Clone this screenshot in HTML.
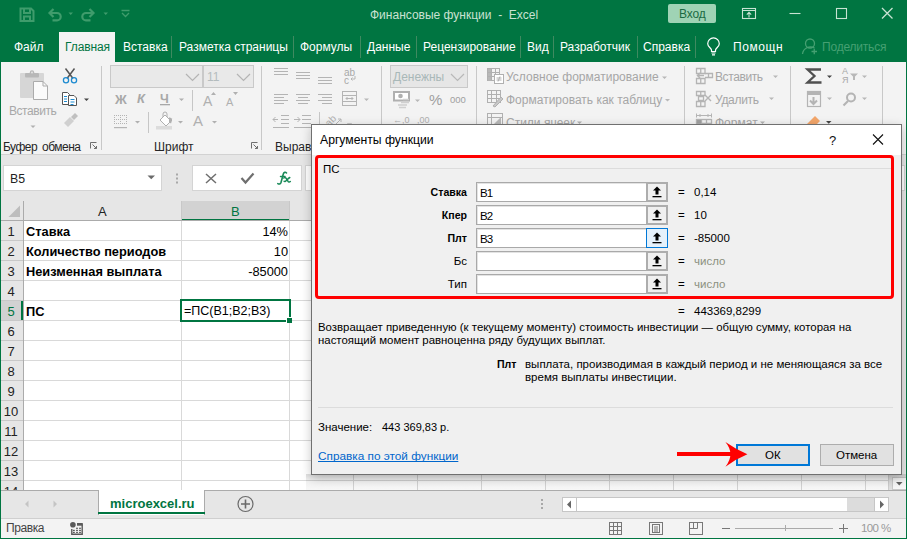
<!DOCTYPE html>
<html><head><meta charset="utf-8">
<style>
*{margin:0;padding:0;box-sizing:border-box}
html,body{width:907px;height:539px;overflow:hidden;background:#fff;font-family:"Liberation Sans",sans-serif;}
.a{position:absolute}
.t{position:absolute;white-space:pre;line-height:1}
#title{left:0;top:0;width:907px;height:62px;background:#007541}
.tab{position:absolute;top:40px;color:#fff;font-size:12px;white-space:pre;line-height:14px}
.tsep{position:absolute;top:36px;width:1px;height:22px;background:#3f8a60}
#ribbon{left:1px;top:62px;width:905px;height:92px;background:#f3f3f3}
.rsep{position:absolute;width:1px;background:#c8c8c8}
.rt{position:absolute;font-size:12px;color:#a6a6a6;white-space:pre;line-height:14px}
.gl{position:absolute;font-size:12px;color:#262626;white-space:pre;line-height:14px;top:140px}
.cell{position:absolute;font-size:12.8px;color:#000;white-space:pre;line-height:15px}
.rh{position:absolute;left:0px;width:22px;text-align:center;font-size:13px;color:#222;line-height:20px;padding-top:2px}
.dlg{font-size:11.5px;color:#000}
.lbl{position:absolute;font-size:11.5px;color:#000;white-space:pre;line-height:14px;text-align:right}
.inp{position:absolute;left:476px;width:171px;height:20px;background:#fff;border:1px solid #a9a9a9;box-shadow:inset 1px 1px 0 #e3e3e3}
.inp span{position:absolute;left:3px;top:3px;font-size:11.5px;line-height:14px;letter-spacing:-0.8px}
.btn{position:absolute;left:646px;width:22px;height:20px;background:#f0f0f0;border:2px solid #adadad}
.eq{position:absolute;left:678px;font-size:11.5px;white-space:pre;line-height:14px}
.val{position:absolute;left:694px;font-size:11.5px;white-space:pre;line-height:14px}
</style></head><body>
<!-- window green border -->
<div class="a" style="left:0;top:0;width:907px;height:539px;background:#007541"></div>
<div class="a" id="title"></div>
<div class="t" style="left:370px;top:9px;font-size:12px;color:#c9e2d2">Финансовые функции  -  Excel</div>

<!-- Excel content area -->
<div class="a" style="left:1px;top:62px;width:905px;height:475px;background:#e6e6e6"></div>
<div class="a" id="ribbon"></div>

<!-- tabs -->
<div class="a" style="left:59px;top:32px;width:56px;height:30px;background:#f3f3f3"></div>
<div class="tab" style="left:14px">Файл</div>
<div class="tab" style="left:65px;color:#007541;letter-spacing:-0.1px">Главная</div>
<div class="tab" style="left:123px">Вставка</div>
<div class="tsep" style="left:171px"></div>
<div class="tab" style="left:179px">Разметка страницы</div>
<div class="tsep" style="left:293px"></div>
<div class="tab" style="left:300px">Формулы</div>
<div class="tsep" style="left:360px"></div>
<div class="tab" style="left:367px">Данные</div>
<div class="tsep" style="left:416px"></div>
<div class="tab" style="left:423px">Рецензирование</div>
<div class="tsep" style="left:520px"></div>
<div class="tab" style="left:527px">Вид</div>
<div class="tsep" style="left:553px"></div>
<div class="tab" style="left:560px">Разработчик</div>
<div class="tsep" style="left:637px"></div>
<div class="tab" style="left:643px">Справка</div>
<div class="tsep" style="left:695px"></div>
<div class="tab" style="left:733px;letter-spacing:0.6px">Помощн</div>
<div class="tab" style="left:822px;color:#45a072;letter-spacing:-0.2px">Поделиться</div>


<!-- title bar icons -->
<svg class="a" style="left:0;top:0" width="907" height="32">
 <g fill="none" stroke="#3f9c6c" stroke-width="2">
  <path d="M20.5 8.5h10.5l2.5 2.5v10h-13z"/>
  <path d="M24 9v4h6v-4 M24 21v-4.5h6v4.5"/>
 </g>
 <g fill="none" stroke="#3f9c6c" stroke-width="2.2">
  <path d="M53.5 9 L49.5 13 L53.5 17 M50 13 H57 A3.7 3.7 0 0 1 57 20.4 H52.5"/>
  <path d="M89.5 9 L93.5 13 L89.5 17 M93 13 H86 A3.7 3.7 0 0 0 86 20.4 H90.5"/>
 </g>
 <path d="M68.5 12.5h4.5l-2.25 2.5z M103.5 12.5h4.5l-2.25 2.5z" fill="#3f9c6c"/>
 <g fill="none" stroke="#3f9c6c" stroke-width="1.3">
  <path d="M121.5 10.5h8 M122 13 l3.5 3.5 l3.5 -3.5"/>
 </g>
 <rect x="668" y="4" width="48" height="19" rx="2" fill="#9fd3b5"/>
 <g fill="none" stroke="#c8e3d3" stroke-width="1.1">
  <rect x="742.5" y="8.5" width="13" height="10"/>
  <path d="M742.5 10.5h13 M749 17.5v-5 M746.8 14.6l2.2-2.2 2.2 2.2"/>
  <path d="M789.5 13.5h11"/>
  <rect x="836.5" y="8.5" width="10" height="10"/>
  <path d="M882 8 l10.5 10.5 M892.5 8 L882 18.5" stroke-width="1.3"/>
 </g>
</svg>
<div class="t" style="left:679px;top:8px;font-size:12px;color:#1b6b43;letter-spacing:-0.1px">Вход</div>
<!-- lightbulb & person icons -->
<svg class="a" style="left:700px;top:34px" width="200" height="26">
 <g fill="none" stroke="#fff" stroke-width="1.2">
  <path d="M11.5 17.5v-1.5c0-1.8-3.8-3.2-3.8-6.3a5.8 5.8 0 0 1 11.6 0c0 3.1-3.8 4.5-3.8 6.3v1.5z"/>
  <path d="M11.5 19h4 M12 20.8h3"/>
 </g>
 <g fill="none" stroke="#45a072" stroke-width="1.3">
  <circle cx="110" cy="9.5" r="4.5"/>
  <path d="M102.5 20a8 8 0 0 1 12 -6 M111.5 17.5h5.5 M114.25 14.75v5.5"/>
 </g>
</svg>

<!-- ribbon: clipboard group -->
<svg class="a" style="left:0;top:62px" width="907" height="92">
 <g fill="#d6d6d6"><rect x="20" y="11" width="24" height="25" rx="1"/></g>
 <rect x="25" y="11" width="14" height="4.5" rx="1" fill="#b8b8b8"/>
 <circle cx="32" cy="10.5" r="2.2" fill="#b8b8b8"/><circle cx="32" cy="10.5" r="0.9" fill="#e8e8e8"/>
 <path d="M33.5 19.5h9.5l4.5 4.5v13.5h-14z" fill="#fafafa" stroke="#ababab"/>
 <path d="M43 19.5v4.5h4.5" fill="none" stroke="#ababab"/>
 <path d="M30.5 63.5h5l-2.5 2.5z" fill="#b0b0b0"/>
 <!-- scissors -->
 <g stroke="#555" stroke-width="1.5" fill="none">
  <path d="M65.5 6.5 L73 16.5 M74.5 6.5 L67 16.5"/>
 </g>
 <g stroke="#1e8bd0" stroke-width="1.3" fill="none">
  <circle cx="66" cy="18.2" r="2.6"/><circle cx="74" cy="18.2" r="2.6"/>
 </g>
 <!-- copy -->
 <path d="M62.5 30.5h5l2 2v10h-7z" fill="#fff" stroke="#555"/>
 <path d="M68.5 33.5h5.5l2.5 2.5v7.5h-8z" fill="#fff" stroke="#555"/>
 <path d="M64 34.5h3 M64 37h3 M64 39.5h3 M70.5 37.5h4 M70.5 40h4 M70.5 42.5h3" stroke="#1e8bd0" stroke-width="1"/>
 <path d="M84 36.5h5l-2.5 2.5z" fill="#444"/>
 <!-- format painter -->
 <path d="M64 61 l6 -6 l4 4 l-6 6z" fill="#d0d0d0"/>
 <path d="M71 55 l4 -4 l3 3 l-4 4z" fill="#c0c0c0"/>
 <!-- launcher -->
 <g fill="none" stroke="#6f6f6f" stroke-width="1">
  <path d="M90.5 86.5v-6h6 M92.5 82.5l4 4 M96.5 84v2.5h-2.5 M251.5 86.5v-6h6 M253.5 82.5l4 4 M257.5 84v2.5h-2.5"/>
 </g>
 <rect x="101" y="4" width="1" height="84" fill="#c8c8c8"/>
 <!-- font group -->
 <rect x="110.5" y="3.5" width="92" height="22" fill="#e9e9e9" stroke="#c9c9c9"/>
 <rect x="203.5" y="3.5" width="50" height="22" fill="#e9e9e9" stroke="#c9c9c9"/>
 <path d="M186 12l6.5 6.5 6.5-6.5 M237 12l6.5 6.5 6.5-6.5" fill="none" stroke="#b4b4b4" stroke-width="1.2"/>
 <rect x="192" y="28" width="1" height="21" fill="#c6c6c6"/>
 <rect x="148" y="50" width="1" height="21" fill="#c6c6c6"/>
 <path d="M179 36.5h5l-2.5 2.5z M135 59h5l-2.5 2.5z M178 59h5l-2.5 2.5z M212 59h5l-2.5 2.5z" fill="#b0b0b0"/>
 <path d="M211 33h5l-2.5-3z M233 30h5l-2.5 3z" fill="#b0b0b0"/>
 <rect x="160" y="42" width="10" height="1.3" fill="#a8a8a8"/>
 <!-- borders icon -->
 <g fill="#b4b4b4">
  <path d="M114 53h1v1h-1z M116 53h1v1h-1z M118 53h1v1h-1z M120 53h1v1h-1z M122 53h1v1h-1z M124 53h1v1h-1z M126 53h1v1h-1z
           M114 57h1v1h-1z M116 57h1v1h-1z M118 57h1v1h-1z M120 57h1v1h-1z M122 57h1v1h-1z M124 57h1v1h-1z M126 57h1v1h-1z
           M114 61h1v1h-1z M116 61h1v1h-1z M118 61h1v1h-1z M120 61h1v1h-1z M122 61h1v1h-1z M124 61h1v1h-1z M126 61h1v1h-1z
           M114 55h1v1h-1z M114 59h1v1h-1z M120 55h1v1h-1z M120 59h1v1h-1z M126 55h1v1h-1z M126 59h1v1h-1z"/>
  <rect x="114" y="65" width="13" height="1.2"/>
 </g>
 <!-- fill bucket -->
 <path d="M160 58 l5 -5 l6 6 l-5 5z" fill="#fff" stroke="#b0b0b0"/>
 <path d="M163 55 v-3 a2 2 0 0 1 4 0 v3" fill="none" stroke="#b0b0b0"/>
 <rect x="156" y="64" width="16" height="3.5" fill="#dcdcdc"/><path d="M169 55.5a2.5 2.5 0 0 1 3 3l-1 3-2-1.5z" fill="#b0b0b0"/>
 <!-- align group -->
 <rect x="261" y="4" width="1" height="84" fill="#c8c8c8"/>
 <g stroke="#b4b4b4" stroke-width="1">
  <path d="M274 6.5h14 M274 9.5h14 M274 12.5h14"/>
  <path d="M296 10.5h14 M296 13.5h14 M296 16.5h14"/>
  <path d="M318 15.5h14 M318 18.5h14 M318 21.5h14"/>
  <path d="M274 32.5h14 M274 35.5h10 M274 38.5h14 M274 41.5h10"/>
  <path d="M296 32.5h14 M298 35.5h10 M296 38.5h14 M298 41.5h10"/>
  <path d="M318 32.5h14 M322 35.5h10 M318 38.5h14 M322 41.5h10"/>
  <path d="M281 53.5h8 M281 57.5h8 M281 61.5h8 M273 65.5h16"/>
  <path d="M302 53.5h9 M302 57.5h9 M302 61.5h9 M294 65.5h17"/>
 </g>
 <path d="M278 57.5h-5 l2.5 -2.5 M273 57.5 l2.5 2.5 M294 57.5h6 l-2.5 -2.5 M300 57.5 l-2.5 2.5" fill="none" stroke="#b4b4b4"/>
 <path d="M355 14v3h-4 M352.5 15.5l-1.5 1.5 1.5 1.5" fill="none" stroke="#b0b0b0" stroke-width="0.9"/>
 <rect x="342.5" y="29.5" width="14" height="14" fill="none" stroke="#b4b4b4"/>
 <path d="M342.5 33.5h14 M342.5 39.5h14 M346 36.5h7 M346 36.5l1.5-1.5 M346 36.5l1.5 1.5 M353 36.5l-1.5-1.5 M353 36.5l-1.5 1.5" fill="none" stroke="#b4b4b4"/>
 <path d="M364 36.5h5l-2.5 2.5z M347 61.5h5l-2.5 2.5z" fill="#b8b8b8"/>
 <rect x="319" y="50" width="1" height="22" fill="#c6c6c6"/>
 <text x="0" y="0" font-size="10" fill="#b0b0b0" transform="translate(329 65) rotate(-45)" font-family="Liberation Sans">ab</text><path d="M336 62l5-5 M338 57h3v3" stroke="#b8b8b8" stroke-width="1" fill="none"/><path d="M347 61.5h5l-2.5 2.5z" fill="#b8b8b8"/>
 <!-- number group -->
 <rect x="381" y="4" width="1" height="84" fill="#c8c8c8"/>
 <rect x="390.5" y="3.5" width="77" height="22" fill="#e6e6e6" stroke="#c9c9c9"/>
 <path d="M451 12l6.5 6.5 6.5-6.5" fill="none" stroke="#b8b8b8" stroke-width="1.2"/>
 <rect x="394" y="30" width="15" height="8.5" fill="#fff" stroke="#b0b0b0" stroke-width="2"/>
 <circle cx="400.5" cy="34" r="2.3" fill="#b0b0b0"/>
 <path d="M403 37.5h6 M401 40.5h8 M398 43h9 M399 45.5h7" stroke="#d0d0d0" stroke-width="1.6"/>
 <path d="M415 37.5h5l-2.5 2.5z M662 14.5h5l-2.5 2.5z M665 37h5l-2.5 2.5z M773 13.5h5l-2.5 2.5z M769 35.5h5l-2.5 2.5z M862 13.5h5l-2.5 2.5z M862 35.5h5l-2.5 2.5z M827 35.5h5l-2.5 2.5z" fill="#b8b8b8"/>
 <rect x="476" y="4" width="1" height="84" fill="#c8c8c8"/>
 <!-- styles icons -->
 <g fill="none" stroke="#b0b0b0">
  <rect x="487.5" y="6.5" width="12" height="12"/><rect x="488" y="7" width="3.5" height="11.5" fill="#b8b8b8" stroke="none"/>
  <path d="M487.5 10.5h12 M487.5 14.5h12 M491.5 6.5v12 M495.5 6.5v12"/>
  <rect x="494.5" y="12.5" width="9" height="9" fill="#fff"/>
  <path d="M496.5 16h5 M496.5 18h5 M500 14.5l-2 5"/>
  <rect x="487.5" y="28.5" width="13" height="12"/>
  <path d="M487.5 32.5h13 M487.5 36.5h13 M491.5 28.5v12 M496.5 28.5v12"/>
  <path d="M493 44 l8 -9 l2 2 l-8 8z" fill="#c8c8c8"/>
 </g>
 <rect x="684" y="4" width="1" height="84" fill="#c8c8c8"/>
 <!-- cells icons -->
 <g fill="none" stroke="#b4b4b4" stroke-width="1.3">
  <path d="M696.5 6.5h8.5v5h-8.5z M696.5 16.5h8.5v5h-8.5z M700.75 6.5v5 M700.75 16.5v5"/>
  <path d="M705 11.5h7.5v4h-7.5 M708.5 11.5v4"/>
  <path d="M704 13.5h-6 M700 11l-2.5 2.5 2.5 2.5" stroke-width="1.5"/>
  <path d="M696.5 29.5h8.5v4h-8.5z M696.5 39.5h8.5v5h-8.5z M700.75 29.5v4 M700.75 39.5v5 M698.5 34.5h5v4h-5z"/>
  <path d="M705 33l6 6 M711 33l-6 6" stroke-width="1.4"/>
  <path d="M696.5 53.5h15 M696.5 51.5v4 M711.5 51.5v4 M699 53.5l1.5-1.5 M699 53.5l1.5 1.5 M709 53.5l-1.5-1.5 M709 53.5l-1.5 1.5" stroke-width="1"/>
  <rect x="696.5" y="57.5" width="15" height="8"/>
  <path d="M696.5 61.5h15 M701.5 57.5v8 M706.5 57.5v8"/>
 </g>
 <rect x="697" y="58" width="4" height="3.5" fill="#a0a0a0"/>
 <rect x="790" y="4" width="1" height="84" fill="#c8c8c8"/>
 <path d="M821 7.5H807.5L814.5 14L807.5 20.5H821.5" fill="none" stroke="#505050" stroke-width="2.3" stroke-linejoin="miter"/>
 <path d="M827 13.5h5l-2.5 2.5z M826 59h5.5l-2.75 2.75z" fill="#444"/>
 <g fill="none" stroke="#b4b4b4" stroke-width="1.2">
  <rect x="807.5" y="29.5" width="13" height="15"/>
  <path d="M813.5 35v7 M810 38.5l3.5 3.5 3.5-3.5" stroke-width="2"/>
  <circle cx="851" cy="35.5" r="4" stroke-width="2"/>
  <path d="M848 39l-4.5 4.5" stroke-width="2.2"/>
 </g>
 <rect x="807" y="29" width="14" height="4" fill="#b4b4b4"/><path d="M850 11.5h8l-3 3v3.5h-2v-3.5z" fill="#b8b8b8"/>
 <rect x="882" y="4" width="1" height="84" fill="#c8c8c8"/>
 <path d="M805 64 l10 -10 l5 5 l-10 10z" fill="#f3a66a"/>
 <path d="M577 59.5h5l-2.5 2.5z M760 59.5h5l-2.5 2.5z" fill="#b0b0b0"/>
 <g fill="none" stroke="#b0b0b0">
  <rect x="487.5" y="51.5" width="15" height="12"/>
  <path d="M487.5 55.5h15 M491.5 51.5v12"/>
  <path d="M496.5 55.5h6"/>
 </g>
 <path d="M493 63l8-8v8z" fill="#b8b8b8"/>
</svg>
<div class="rt" style="left:9px;top:104px;font-size:12px;letter-spacing:-0.45px;color:#a8a8a8">Вставить</div>
<div class="gl" style="left:3px;top:140px;font-size:12px;letter-spacing:-0.5px;word-spacing:2px">Буфер обмена</div>
<div class="gl" style="left:154px">Шрифт</div>
<div class="gl" style="left:275px">Выравнивание</div>
<div class="rt" style="left:115px;top:93px;font-weight:bold;font-size:13px;color:#a8a8a8">Ж</div>
<div class="rt" style="left:137px;top:92px;font-weight:bold;font-style:italic;font-size:13px;color:#a8a8a8">К</div>
<div class="rt" style="left:160px;top:92px;font-weight:bold;font-size:12.5px;color:#a8a8a8">Ч</div>
<div class="rt" style="left:203px;top:94px;font-size:14px;color:#b0b0b0">A</div>
<div class="rt" style="left:226px;top:95px;font-size:11px;color:#b0b0b0">A</div>
<div class="rt" style="left:193px;top:114px;font-size:15px;color:#b0b0b0">A</div>
<div class="rt" style="left:207px;top:70px;font-size:12px;color:#b4bcbe">11</div>
<div class="rt" style="left:344px;top:68px;font-size:10px;line-height:10px;color:#a8a8a8">ab</div><div class="rt" style="left:344px;top:76px;font-size:10px;line-height:10px;color:#a8a8a8">c</div>
<div class="rt" style="left:393px;top:70px;font-size:12px;color:#a9b8b8">Денежны</div>
<div class="rt" style="left:429px;top:93px;font-size:15px;color:#a0a0a0">%</div>
<div class="rt" style="left:450px;top:93px;font-size:9.5px;color:#a0a0a0">000</div>
<div class="rt" style="left:393px;top:113px;font-size:9px;color:#b0b0b0">←,0</div>
<div class="rt" style="left:417px;top:113px;font-size:9px;color:#b0b0b0">,00</div>
<div class="rt" style="left:506px;top:70px">Условное форматирование</div>
<div class="rt" style="left:506px;top:93px">Форматировать как таблицу</div>
<div class="rt" style="left:506px;top:116px">Стили ячеек</div>
<div class="rt" style="left:715px;top:70px;letter-spacing:-0.4px">Вставить</div>
<div class="rt" style="left:715px;top:93px;letter-spacing:-0.3px">Удалить</div>
<div class="rt" style="left:715px;top:116px">Формат</div>
<div class="rt" style="left:842px;top:67px;font-size:9px;line-height:9px;color:#a8a8a8">А</div><div class="rt" style="left:842px;top:76px;font-size:9px;line-height:9px;color:#a8a8a8">Я</div>

<!-- grid -->
<div class="a" style="left:1px;top:154px;width:905px;height:336px;background:#e6e6e6;border-top:1px solid #d2d2d2"></div>
<div class="a" style="left:3px;top:165px;width:159px;height:26px;background:#fff;border:1px solid #d4d4d4"></div>
<div class="t" style="left:10px;top:173px;font-size:12.3px;color:#222">B5</div>

<div class="a" style="left:192px;top:165px;width:110px;height:26px;background:#fff;border:1px solid #d4d4d4"></div>
<svg class="a" style="left:270px;top:165px" width="25" height="25"><g fill="none" stroke="#1a8a58" stroke-linecap="round">
 <path d="M16.5 8 C15.5 6.8 13.8 7.2 13.3 9 L11 17.5 C10.5 19 9.2 19.5 7.8 18.6" stroke-width="1.6"/>
 <path d="M10.5 11.5 H15" stroke-width="1.5"/>
 <path d="M13.8 13 C15.3 12 16.3 13 16.8 14.5 L17.8 16 C18.3 17 19.3 17.5 20.3 16.5" stroke-width="1.5"/>
 <path d="M19.8 12.5 C18.8 13 18.3 13.5 17.3 14.5 L15.8 16 C15.3 16.5 14.6 16.8 14.1 16.3" stroke-width="1.5"/>
</g></svg>
<div class="a" style="left:305px;top:165px;width:600px;height:26px;background:#fff;border:1px solid #d4d4d4"></div>
<svg class="a" style="left:0;top:155px" width="907" height="45"><path d="M147.5 20.5h7.5l-3.75 3.75z" fill="#6a6a6a"/><g fill="#a8a8a8"><rect x="176" y="18.5" width="2" height="2"/><rect x="176" y="22.5" width="2" height="2"/><rect x="176" y="26.5" width="2" height="2"/></g><path d="M206 19l10 9 M216 19l-10 9" stroke="#6f6f6f" stroke-width="1.5" fill="none"/><path d="M241.5 23l4 4.5 8-9" stroke="#6f6f6f" stroke-width="2.2" fill="none"/></svg>
<div class="a" style="left:23px;top:220px;width:865px;height:270px;background:#fff"></div>
<div class="a" style="left:181px;top:201px;width:108px;height:19px;background:#d2d2d2"></div>
<div class="a" style="left:181px;top:219px;width:108px;height:2px;background:#007541"></div>
<div class="a" style="left:1px;top:300px;width:22px;height:20px;background:#d2d2d2"></div>
<div class="a" style="left:21px;top:300px;width:2px;height:20px;background:#007541"></div>
<svg class="a" style="left:0;top:195px" width="907" height="295">
<path d="M20 10.5v11.5h-11.5z" fill="#bdbdbd"/>
<rect x="23" y="6" width="1" height="289" fill="#ababab"/>
<rect x="1" y="25" width="887" height="1" fill="#ababab"/>
<rect x="181" y="6" width="1" height="19" fill="#c8c8c8"/>
<rect x="181" y="26" width="1" height="269" fill="#d9d9d9"/>
<rect x="289" y="6" width="1" height="19" fill="#c8c8c8"/>
<rect x="289" y="26" width="1" height="269" fill="#d9d9d9"/>
<rect x="353" y="6" width="1" height="19" fill="#c8c8c8"/>
<rect x="353" y="26" width="1" height="269" fill="#d9d9d9"/>
<rect x="417" y="6" width="1" height="19" fill="#c8c8c8"/>
<rect x="417" y="26" width="1" height="269" fill="#d9d9d9"/>
<rect x="481" y="6" width="1" height="19" fill="#c8c8c8"/>
<rect x="481" y="26" width="1" height="269" fill="#d9d9d9"/>
<rect x="545" y="6" width="1" height="19" fill="#c8c8c8"/>
<rect x="545" y="26" width="1" height="269" fill="#d9d9d9"/>
<rect x="609" y="6" width="1" height="19" fill="#c8c8c8"/>
<rect x="609" y="26" width="1" height="269" fill="#d9d9d9"/>
<rect x="673" y="6" width="1" height="19" fill="#c8c8c8"/>
<rect x="673" y="26" width="1" height="269" fill="#d9d9d9"/>
<rect x="737" y="6" width="1" height="19" fill="#c8c8c8"/>
<rect x="737" y="26" width="1" height="269" fill="#d9d9d9"/>
<rect x="801" y="6" width="1" height="19" fill="#c8c8c8"/>
<rect x="801" y="26" width="1" height="269" fill="#d9d9d9"/>
<rect x="865" y="6" width="1" height="19" fill="#c8c8c8"/>
<rect x="865" y="26" width="1" height="269" fill="#d9d9d9"/>
<rect x="24" y="45" width="864" height="1" fill="#d9d9d9"/>
<rect x="1" y="45" width="22" height="1" fill="#c8c8c8"/>
<rect x="24" y="65" width="864" height="1" fill="#d9d9d9"/>
<rect x="1" y="65" width="22" height="1" fill="#c8c8c8"/>
<rect x="24" y="85" width="864" height="1" fill="#d9d9d9"/>
<rect x="1" y="85" width="22" height="1" fill="#c8c8c8"/>
<rect x="24" y="105" width="864" height="1" fill="#d9d9d9"/>
<rect x="1" y="105" width="22" height="1" fill="#c8c8c8"/>
<rect x="24" y="125" width="864" height="1" fill="#d9d9d9"/>
<rect x="1" y="125" width="22" height="1" fill="#c8c8c8"/>
<rect x="24" y="145" width="864" height="1" fill="#d9d9d9"/>
<rect x="1" y="145" width="22" height="1" fill="#c8c8c8"/>
<rect x="24" y="165" width="864" height="1" fill="#d9d9d9"/>
<rect x="1" y="165" width="22" height="1" fill="#c8c8c8"/>
<rect x="24" y="185" width="864" height="1" fill="#d9d9d9"/>
<rect x="1" y="185" width="22" height="1" fill="#c8c8c8"/>
<rect x="24" y="205" width="864" height="1" fill="#d9d9d9"/>
<rect x="1" y="205" width="22" height="1" fill="#c8c8c8"/>
<rect x="24" y="225" width="864" height="1" fill="#d9d9d9"/>
<rect x="1" y="225" width="22" height="1" fill="#c8c8c8"/>
<rect x="24" y="245" width="864" height="1" fill="#d9d9d9"/>
<rect x="1" y="245" width="22" height="1" fill="#c8c8c8"/>
<rect x="24" y="265" width="864" height="1" fill="#d9d9d9"/>
<rect x="1" y="265" width="22" height="1" fill="#c8c8c8"/>
<rect x="24" y="285" width="864" height="1" fill="#d9d9d9"/>
<rect x="1" y="285" width="22" height="1" fill="#c8c8c8"/>
</svg>
<div class="t" style="left:98px;top:205px;font-size:13px;color:#222">A</div>
<div class="t" style="left:231px;top:205px;font-size:13px;color:#007541">B</div>
<div class="rh" style="top:220px;color:#222">1</div>
<div class="rh" style="top:240px;color:#222">2</div>
<div class="rh" style="top:260px;color:#222">3</div>
<div class="rh" style="top:280px;color:#222">4</div>
<div class="rh" style="top:300px;color:#007541">5</div>
<div class="rh" style="top:320px;color:#222">6</div>
<div class="rh" style="top:340px;color:#222">7</div>
<div class="rh" style="top:360px;color:#222">8</div>
<div class="rh" style="top:380px;color:#222">9</div>
<div class="rh" style="top:400px;color:#222">10</div>
<div class="rh" style="top:420px;color:#222">11</div>
<div class="rh" style="top:440px;color:#222">12</div>
<div class="rh" style="top:460px;color:#222">13</div>
<div class="rh" style="top:480px;color:#222">14</div>
<div class="cell" style="left:26px;top:224px;font-weight:bold">Ставка</div>
<div class="cell" style="left:26px;top:244px;font-weight:bold">Количество периодов</div>
<div class="cell" style="left:26px;top:264px;font-weight:bold">Неизменная выплата</div>
<div class="cell" style="left:26px;top:304px;font-weight:bold">ПС</div>
<div class="cell" style="right:619px;top:224px">14%</div>
<div class="cell" style="right:619px;top:244px">10</div>
<div class="cell" style="right:619px;top:264px">-85000</div>
<div class="a" style="left:180px;top:299px;width:111px;height:23px;border:2px solid #007541;background:#fff"></div>
<div class="a" style="left:286px;top:317px;width:6px;height:6px;background:#007541;border:1px solid #fff;border-right:0;border-bottom:0"></div>
<div class="cell" style="left:184px;top:304px;font-size:12.5px">=ПС(B1;B2;B3)</div>
<div class="a" style="left:888px;top:201px;width:17px;height:289px;background:#e6e6e6;border-left:1px solid #d4d4d4"></div>
<div class="a" style="left:892px;top:477px;width:14px;height:13px;background:#fff;border:1px solid #d0d0d0;border-right:0"></div>
<svg class="a" style="left:892px;top:477px" width="14" height="13"><path d="M4 5h6.5l-3.25 3.5z" fill="#666"/></svg>
<div class="a" style="left:1px;top:490px;width:905px;height:29px;background:#e6e6e6;border-top:1px solid #ababab;border-bottom:1px solid #cfcfcf"></div>
<div class="a" style="left:98px;top:490px;width:107px;height:25px;background:#fff;border-left:1px solid #ababab;border-right:1px solid #ababab"></div>
<div class="a" style="left:98px;top:512px;width:107px;height:2px;background:#007541"></div>
<div class="t" style="left:110px;top:497px;font-size:13px;font-weight:bold;color:#007541">microexcel.ru</div>
<svg class="a" style="left:0;top:490px" width="907" height="48"><path d="M25 14l3.5-3.5v7z M57 14l-3.5-3.5v7z" fill="#c4c4c4"/><circle cx="245.5" cy="14" r="7.5" fill="none" stroke="#6a6a6a" stroke-width="1.2"/><path d="M245.5 9.5v9 M241 14h9" stroke="#6a6a6a" stroke-width="1.6"/><g fill="#a8a8a8"><rect x="541" y="9" width="2" height="2"/><rect x="541" y="13" width="2" height="2"/><rect x="541" y="17" width="2" height="2"/></g></svg>
<div class="a" style="left:562px;top:497px;width:327px;height:15px;background:#fff;border:1px solid #c6c6c6"></div>
<div class="a" style="left:576px;top:497px;width:1px;height:15px;background:#c6c6c6"></div>
<div class="a" style="left:847px;top:498px;width:27px;height:13px;background:#dcdcdc"></div>
<div class="a" style="left:874px;top:497px;width:1px;height:15px;background:#c6c6c6"></div>
<svg class="a" style="left:562px;top:497px" width="327" height="15"><path d="M5 7.5l4-4v8z M322 7.5l-4-4v8z" fill="#666"/></svg>
<div class="a" style="left:1px;top:519px;width:905px;height:19px;background:#f3f3f3"></div>
<div class="t" style="left:6px;top:522px;font-size:12px;letter-spacing:-0.4px;color:#444">Правка</div>
<svg class="a" style="left:0;top:518px" width="907" height="20"><circle cx="72.9" cy="6.8" r="2.8" fill="#5a5a5a"/><rect x="77" y="5" width="5.8" height="2.7" fill="#5a5a5a"/><path d="M71.8 11v5.3h10.4v-10" fill="none" stroke="#5a5a5a" stroke-width="1.4"/><g fill="#5a5a5a"><rect x="76.1" y="9.7" width="1.8" height="1.2"/><rect x="79.1" y="9.7" width="1.8" height="1.2"/><rect x="73" y="11.8" width="1.8" height="1.2"/><rect x="76.1" y="11.8" width="1.8" height="1.2"/><rect x="79.1" y="11.8" width="1.8" height="1.2"/><rect x="73" y="13.8" width="1.8" height="1.2"/><rect x="76.1" y="13.8" width="1.8" height="1.2"/><rect x="79.1" y="13.8" width="1.8" height="1.2"/></g><g fill="none" stroke="#777"><rect x="609.5" y="4.5" width="12" height="12"/><path d="M609.5 8.5h12 M609.5 12.5h12 M613.5 4.5v12 M617.5 4.5v12"/><rect x="649.5" y="4.5" width="13" height="12"/><rect x="652.5" y="6.5" width="7" height="8"/><path d="M654 9h4 M654 11h4 M654 13h4"/><rect x="689.5" y="4.5" width="13" height="12"/><path d="M693.5 4.5v6 M697.5 4.5v6h-8"/><path d="M722 10.5h8 M839 10.5h9 M843.5 6v9"/></g><rect x="735" y="10" width="98" height="1" fill="#aaa"/><rect x="785" y="7" width="1" height="6" fill="#aaa"/></svg>
<div class="t" style="left:861px;top:523px;font-size:11.5px;letter-spacing:-0.6px;word-spacing:0px;color:#9a9a9a">100 %</div>

<!-- dialog -->
<div class="a" style="left:306px;top:474px;width:600px;height:16px;background:linear-gradient(rgba(0,0,0,0.13),rgba(0,0,0,0.05) 45%,rgba(0,0,0,0.03))"></div>
<div class="a" style="left:311px;top:124px;width:591px;height:351px;background:#f0f0f0;border:1px solid #707070;box-shadow:0 3px 10px rgba(0,0,0,0.22)"></div>
<div class="a" style="left:312px;top:125px;width:589px;height:30px;background:#fff"></div>
<div class="t" style="left:320px;top:134px;font-size:12.2px">Аргументы функции</div>
<svg class="a" style="left:820px;top:125px" width="80" height="30"><path d="M53 9.5l10 10 M63 9.5l-10 10" stroke="#111" stroke-width="1.1" fill="none"/></svg>
<div class="t" style="left:829px;top:134px;font-size:13px;color:#111">?</div>
<div class="a" style="left:340px;top:168px;width:551px;height:1px;background:#dcdcdc"></div>
<div class="t" style="left:323px;top:164px;font-size:11.5px">ПС</div>
<div class="lbl" style="right:440px;top:185px;font-weight:bold;font-size:10.6px">Ставка</div>
<div class="inp" style="top:182px"><span>B1</span></div>
<div class="btn" style="top:182px"></div>
<svg class="a" style="left:646px;top:182px" width="22" height="20"><path d="M11 4.5l-4 4h2.5v4h3v-4h2.5z" fill="#000"/><rect x="6.5" y="14" width="9" height="1.3" fill="#000"/></svg>
<div class="eq" style="top:185px">=</div>
<div class="val" style="top:185px;color:#000">0,14</div>
<div class="lbl" style="right:440px;top:208px;font-weight:bold;font-size:10.6px">Кпер</div>
<div class="inp" style="top:205px"><span>B2</span></div>
<div class="btn" style="top:205px"></div>
<svg class="a" style="left:646px;top:205px" width="22" height="20"><path d="M11 4.5l-4 4h2.5v4h3v-4h2.5z" fill="#000"/><rect x="6.5" y="14" width="9" height="1.3" fill="#000"/></svg>
<div class="eq" style="top:208px">=</div>
<div class="val" style="top:208px;color:#000">10</div>
<div class="lbl" style="right:440px;top:231px;font-weight:bold;font-size:10.6px">Плт</div>
<div class="inp" style="top:228px"><span>B3</span></div>
<div class="btn" style="top:228px;border:1px solid #0078d7;background:#e5f1fb"></div>
<svg class="a" style="left:646px;top:228px" width="22" height="20"><path d="M11 4.5l-4 4h2.5v4h3v-4h2.5z" fill="#000"/><rect x="6.5" y="14" width="9" height="1.3" fill="#000"/></svg>
<div class="eq" style="top:231px">=</div>
<div class="val" style="top:231px;color:#000">-85000</div>
<div class="lbl" style="right:440px;top:254px;font-weight:normal;font-size:11.5px">Бс</div>
<div class="inp" style="top:251px"><span></span></div>
<div class="btn" style="top:251px"></div>
<svg class="a" style="left:646px;top:251px" width="22" height="20"><path d="M11 4.5l-4 4h2.5v4h3v-4h2.5z" fill="#000"/><rect x="6.5" y="14" width="9" height="1.3" fill="#000"/></svg>
<div class="eq" style="top:254px">=</div>
<div class="val" style="top:254px;color:#8c9080">число</div>
<div class="lbl" style="right:440px;top:277px;font-weight:normal;font-size:11.5px">Тип</div>
<div class="inp" style="top:274px"><span></span></div>
<div class="btn" style="top:274px"></div>
<svg class="a" style="left:646px;top:274px" width="22" height="20"><path d="M11 4.5l-4 4h2.5v4h3v-4h2.5z" fill="#000"/><rect x="6.5" y="14" width="9" height="1.3" fill="#000"/></svg>
<div class="eq" style="top:277px">=</div>
<div class="val" style="top:277px;color:#8c9080">число</div>
<div class="a" style="left:315px;top:155px;width:579px;height:144px;border:3px solid #ff0000;border-radius:4px"></div>
<div class="eq" style="top:304px">=</div>
<div class="val" style="top:304px">443369,8299</div>
<div class="t" style="left:318px;top:321px;font-size:11.42px;line-height:13px">Возвращает приведенную (к текущему моменту) стоимость инвестиции — общую сумму, которая на
настоящий момент равноценна ряду будущих выплат.</div>
<div class="t" style="left:497px;top:358px;font-size:10.6px;font-weight:bold;line-height:13px">Плт</div>
<div class="t" style="left:525px;top:358px;font-size:11.5px;line-height:13px">выплата, производимая в каждый период и не меняющаяся за все
время выплаты инвестиции.</div>
<div class="a" style="left:318px;top:407px;width:575px;height:1px;background:#dcdcdc"></div>
<div class="t" style="left:318px;top:422px;font-size:11.5px">Значение:</div>
<div class="t" style="left:382px;top:422px;font-size:11px">443 369,83 р.</div>
<div class="t" style="left:318px;top:451px;font-size:11.8px;color:#0066cc;text-decoration:underline;text-decoration-skip-ink:none">Справка по этой функции</div>
<div class="a" style="left:736px;top:444px;width:74px;height:22px;background:#e1e1e1;border:2px solid #0078d7"></div>
<div class="t" style="left:765px;top:450px;font-size:11.5px">ОК</div>
<div class="a" style="left:820px;top:444px;width:74px;height:22px;background:#e1e1e1;border:1px solid #adadad"></div>
<div class="t" style="left:836px;top:450px;font-size:11.5px">Отмена</div>
<svg class="a" style="left:670px;top:435px" width="90" height="40"><rect x="7" y="17" width="56" height="4" fill="#ff0000"/><path d="M55.4 7.1 Q66 14.5 77.4 19.3 Q66 24 55.4 31.7 Q65.5 19.3 55.4 7.1z" fill="#ff0000"/></svg>
</body></html>
